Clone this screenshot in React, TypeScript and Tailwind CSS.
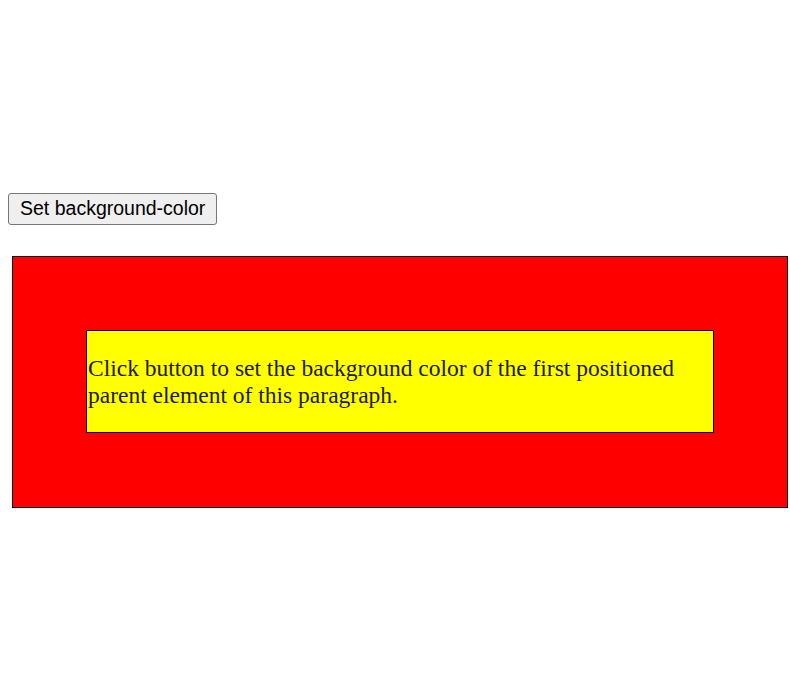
const App = () => {
  return (
    <div className="min-h-[680px] bg-white pl-2">
      <button
        type="button"
        className="mt-[193px] h-8 rounded-[3px] border border-[#767676] bg-[#efefef] px-[11px] pb-[2px] text-[19.5px] leading-[22px] text-black [font-family:'Liberation_Sans',Arial,sans-serif]"
      >
        Set background-color
      </button>

      <div className="relative mt-[31px] ml-1 w-[776px] border border-black bg-[#ff0000] px-[73px] pt-[73px] pb-[74px]">
        <div className="relative border border-black bg-[#ffff00] px-px pt-[24px] pb-[23px]">
          <p className="text-[23.5px] leading-[27px] text-[#1a1a00] [font-family:'Liberation_Serif','Times_New_Roman',serif]">
            Click button to set the background color of the first positioned parent element of this paragraph.
          </p>
        </div>
      </div>
    </div>
  );
};

export default App;
